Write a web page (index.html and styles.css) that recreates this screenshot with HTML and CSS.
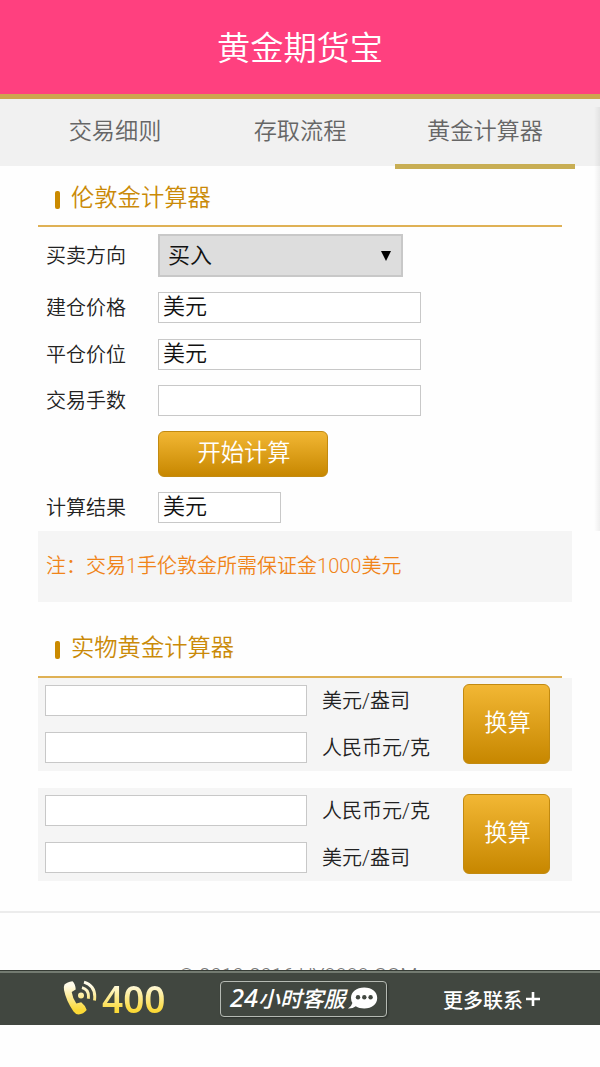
FILE: index.html
```html
<!DOCTYPE html>
<html lang="zh-CN">
<head>
  <meta charset="UTF-8" />
  <meta name="viewport" content="width=device-width, initial-scale=1">
  <title>黄金期货宝</title>
  <link rel="stylesheet" href="styles.css">
</head>
<body>

  <header class="header">黄金期货宝</header>

  <nav class="tabs">
    <a href="#">交易细则</a>
    <a href="#">存取流程</a>
    <a href="#" class="active">黄金计算器</a>
  </nav>

  <div class="edge"></div>

  <main class="content">
    <h2 class="title">伦敦金计算器</h2>

    <form class="calc">
      <div class="row row-select">
        <label>买卖方向</label>
        <div class="select"><span>买入</span><i class="arrow"></i></div>
      </div>
      <div class="row">
        <label>建仓价格</label>
        <input type="text" value="美元">
      </div>
      <div class="row">
        <label>平仓价位</label>
        <input type="text" value="美元">
      </div>
      <div class="row">
        <label>交易手数</label>
        <input type="text">
      </div>
      <button type="button" class="btn btn-start">开始计算</button>
      <div class="row">
        <label>计算结果</label>
        <input type="text" class="short" value="美元">
      </div>
    </form>

    <p class="note">注：交易1手伦敦金所需保证金1000美元</p>

    <h2 class="title">实物黄金计算器</h2>

    <div class="convert">
      <div class="fields">
        <div class="field"><input type="text"><span>美元/盎司</span></div>
        <div class="field"><input type="text"><span>人民币元/克</span></div>
      </div>
      <button type="button" class="btn btn-convert">换算</button>
    </div>

    <div class="convert">
      <div class="fields">
        <div class="field"><input type="text"><span>人民币元/克</span></div>
        <div class="field"><input type="text"><span>美元/盎司</span></div>
      </div>
      <button type="button" class="btn btn-convert">换算</button>
    </div>
  </main>

  <footer class="footer">© 2010-2016 HY9999.COM</footer>

  <div class="bottom-bar">
    <a href="#" class="phone">
      <svg width="35" height="36" viewBox="0 0 35 36">
        <defs>
          <linearGradient id="gold" gradientUnits="userSpaceOnUse" x1="0" y1="2" x2="0" y2="35">
            <stop offset="0.1" stop-color="#fffbe9" />
            <stop offset="0.85" stop-color="#fbd936" />
          </linearGradient>
        </defs>
        <path fill="url(#gold)" d="M1.5 4.5Q4 2 9.5 1.2Q12.5 4 12.7 9.5L8.7 12Q9.5 18 13.3 23.5L18.2 22.2Q22.5 25.5 23.7 30Q20.5 34 15.5 34.5Q12.5 34.3 10.5 31.5Q3 20.5 1 10Q.5 6.5 1.5 4.5Z" />
        <circle fill="url(#gold)" cx="18" cy="15.5" r="3" />
        <path fill="none" stroke="url(#gold)" stroke-width="2.9" d="M19 7.7Q26.5 9.7 25.3 18.7M21 2.2Q33.5 6 31.5 20.5" />
      </svg>
      <span>400</span>
    </a>
    <a href="#" class="service">
      <span><b>24</b>小时客服</span>
      <svg width="31" height="23" viewBox="0 0 31 23">
        <path fill="#fff" d="M17.2.5C25 .5 30.2 5 30.2 11S25 21.5 17.2 21.5C14 21.5 11 20.8 8.8 19.3Q5.5 21.8 1 21.5Q4.6 19.5 5.4 16Q4 13.8 4 11C4 5 9.5.5 17.2.5Z" />
        <g fill="#414740">
          <circle cx="11" cy="10.2" r="2.2" />
          <circle cx="17.3" cy="10.2" r="2.2" />
          <circle cx="23.6" cy="10.2" r="2.2" />
        </g>
      </svg>
    </a>
    <a href="#" class="more">
      <span>更多联系</span>
      <svg width="14" height="14" viewBox="0 0 14 14">
        <path stroke="#fff" stroke-width="2.6" d="M7 0V14M0 7H14" />
      </svg>
    </a>
  </div>

</body>
</html>
```
FILE: styles.css
```css
* {
  box-sizing: border-box;
}

body {
  margin: 0;
  background-color: #fefefe;
  color: #222;
  font-family: Roboto, "Noto Sans CJK SC", sans-serif;
  font-weight: 350;
  overflow: hidden;
}

a {
  text-decoration: none;
}

.header {
  height: 98.5px;
  border-bottom: 5px solid #cea44f;
  background-color: #ff407f;
  color: #fff;
  font-size: 33.2px;
  line-height: 97px;
  text-align: center;
}

.tabs {
  display: flex;
  justify-content: center;
  gap: 5px;
  height: 67px;
  background-color: #f1f1f1;
}

.tabs a {
  width: 180px;
  height: 70px;
  color: #666;
  font-size: 23.2px;
  line-height: 64px;
  text-align: center;
}

.tabs .active {
  border-bottom: 5px solid #c8ae54;
}

/* soft shadow on the right side of the page */
.edge {
  position: absolute;
  top: 107px;
  right: 0;
  width: 6px;
  height: 424px;
  background: linear-gradient(to right, rgba(0, 0, 0, 0), rgba(0, 0, 0, 0.06));
}

.content {
  padding: 0 28px 0 38px;
}

.title {
  display: flex;
  align-items: center;
  width: 524px;
  height: 61.5px;
  margin: 0;
  padding: 5px 0 0 17px;
  border-bottom: 2px solid #dfb155;
  color: #ca8a08;
  font-size: 23.3px;
  font-weight: 350;
  line-height: 54px;
}

.title::before {
  content: "";
  width: 5px;
  height: 18px;
  margin: 4px 11px 0 0;
  border-radius: 2px;
  background-color: #ca8a00;
}

.calc {
  height: 304px;
  padding: 7px 0 0 8px;
}

.row {
  display: flex;
  align-items: center;
  height: 31px;
  margin-bottom: 15.7px;
  font-size: 20px;
}

.row label {
  width: 112px;
  padding-bottom: 2px;
}

.row-select {
  height: 43px;
  margin-bottom: 15px;
}

input {
  width: 263px;
  height: 31px;
  padding: 0 4px 7px;
  border: 1px solid #c8c8c8;
  background-color: #fff;
  color: #111;
  font: inherit;
  font-size: 22px;
  line-height: 22px;
}

.short {
  width: 123px;
}

.select {
  display: flex;
  align-items: center;
  justify-content: space-between;
  width: 245px;
  height: 43px;
  padding: 0 10px 6px 8px;
  border: 2px solid #c8c8c8;
  background-color: #ddd;
  color: #111;
  font-size: 22px;
}

.arrow {
  margin-top: 6px;
  border: 5px solid transparent;
  border-top: 10px solid #000;
  border-bottom: 0;
}

.btn {
  border: 1px solid #c28a10;
  border-radius: 6px;
  background: linear-gradient(#f2b734, #c78700);
  color: #fff;
  font: inherit;
  font-size: 23.3px;
  padding: 0 0 6px 2px;
}

.btn-start {
  display: block;
  width: 170px;
  height: 46px;
  margin: -1px 0 15px 112px;
}

.note {
  height: 71px;
  margin: 0 0 14px;
  padding-left: 8px;
  background-color: #f5f5f5;
  color: #f08419;
  font-size: 20px;
  line-height: 70px;
}

.convert {
  display: flex;
  justify-content: space-between;
  height: 93px;
  margin: 0 0 17px;
  padding: 6px 22px 0 7px;
  background-color: #f5f5f5;
}

.field {
  display: flex;
  align-items: center;
  gap: 15px;
  height: 31px;
  margin: 1px 0 16px;
  font-size: 20px;
}

.field input {
  width: 262px;
}

.field + .field {
  margin: 0;
}

.field span {
  padding-top: 2px;
  line-height: 31px;
}

.btn-convert {
  width: 87px;
  height: 80px;
}

.footer {
  height: 59px;
  margin-top: 30px;
  padding: 51px 4px 0 0;
  border-top: 2px solid #ececec;
  color: #777;
  font-size: 20px;
  line-height: 24px;
  text-align: center;
}

/* covers the lower part of the copyright line */
.bottom-bar {
  display: flex;
  height: 55px;
  border-top: 1px solid #353b34;
  background: linear-gradient(#737b71 0 2px, #414740 2px);
  color: #fff;
  position: relative;
}

.bottom-bar a {
  display: flex;
  align-items: center;
  color: #fff;
}

.phone {
  width: 157px;
  margin-left: 63px;
}

.phone span {
  margin-left: 4px;
  padding-top: 2px;
  background: linear-gradient(#fffae0 25%, #fbd936 75%);
  -webkit-background-clip: text;
  background-clip: text;
  color: transparent;
  font-family: "Noto Sans", sans-serif;
  font-size: 37px;
  font-weight: 600;
  line-height: 50px;
}

.service {
  width: 167px;
  height: 36px;
  margin-top: 10px;
  padding-left: 9px;
  border: 1px solid #b5bab3;
  border-radius: 4px;
  box-shadow: 1px 1px 2px #2b302a;
  font-size: 21.8px;
  font-weight: 500;
}

.service span {
  width: 117px;
  font-style: italic;
  line-height: 34px;
  white-space: nowrap;
}

.service b {
  font-family: "Noto Sans", sans-serif;
  font-size: 25.5px;
  font-weight: 500;
}

.more {
  gap: 3px;
  margin-left: 56px;
  padding-top: 3px;
  font-size: 20px;
  font-weight: 500;
}
```
